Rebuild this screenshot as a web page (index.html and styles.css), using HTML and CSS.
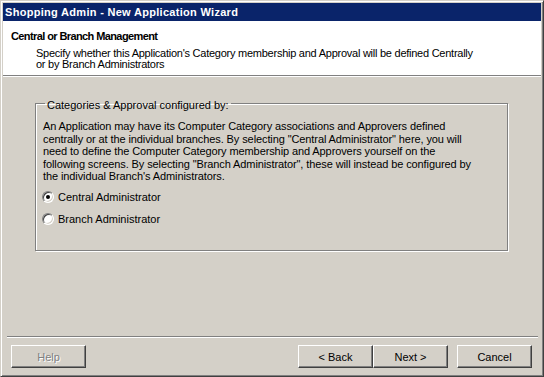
FILE: index.html
```html
<!DOCTYPE html>
<html lang="en">
<head>
    <meta charset="UTF-8">
    <title>Shopping Admin - New Application Wizard</title>
    <link rel="stylesheet" href="styles.css">
</head>
<body>
    <div class="window">
        <div class="titlebar">Shopping Admin - New Application Wizard</div>

        <div class="wizard-header">
            <div class="header-title">Central or Branch Management</div>
            <div class="header-desc">
                Specify whether this Application's Category membership and Approval will be defined Centrally<br>
                or by Branch Administrators
            </div>
        </div>

        <div class="wizard-body">
            <fieldset class="group">
                <legend>Categories &amp; Approval configured by:</legend>
                <p class="group-text">
                    An Application may have its Computer Category associations and Approvers defined<br>
                    centrally or at the individual branches. By selecting "Central Administrator" here, you will<br>
                    need to define the Computer Category membership and Approvers yourself on the<br>
                    following screens. By selecting "Branch Administrator", these will instead be configured by<br>
                    the individual Branch's Administrators.
                </p>
                <label class="radio-row">
                    <input type="radio" name="mode" checked>
                    Central Administrator
                </label>
                <label class="radio-row">
                    <input type="radio" name="mode">
                    Branch Administrator
                </label>
            </fieldset>
        </div>

        <div class="wizard-footer">
            <button class="btn" disabled>Help</button>
            <div class="nav-buttons">
                <button class="btn">&lt; Back</button>
                <button class="btn">Next &gt;</button>
                <button class="btn cancel">Cancel</button>
            </div>
        </div>
    </div>
</body>
</html>
```

FILE: styles.css
```css
body {
    margin: 0;
    background: #d4d0c8;
    font-family: "Liberation Sans", Arial, sans-serif;
    font-size: 11px;
    color: #000;
}
.window {
    width: 544px;
    height: 377px;
    box-sizing: border-box;
    display: flex;
    flex-direction: column;
    padding: 2px;
    border: 1px solid;
    border-color: #d4d0c8 #404040 #404040 #d4d0c8;
    box-shadow: inset 1px 1px 0 #fff, inset -1px -1px 0 #808080;
}
.titlebar {
    height: 18px;
    line-height: 18px;
    padding-left: 2px;
    background: #0a246a;
    color: #fff;
    font-weight: bold;
    letter-spacing: 0.3px;
}
.wizard-header {
    height: 55px;
    box-sizing: border-box;
    padding: 9px 0 0 8px;
    background: #fff;
    border-bottom: 1px solid #808080;
    box-shadow: 0 1px 0 #fff;
}
.header-title {
    font-weight: bold;
    line-height: 13px;
    letter-spacing: -0.6px;
}
.header-desc {
    margin: 5px 0 0 25px;
    line-height: 11px;
    letter-spacing: -0.25px;
}
.wizard-body {
    flex: 1;
    padding: 18px 33px 0 32px;
}
.group {
    margin: 0;
    padding: 0 7px;
    height: 157px;
    box-sizing: border-box;
    border: 1px solid #808080;
    box-shadow: 1px 1px 0 #fff, inset 1px 1px 0 #fff;
}
.group legend {
    margin-left: 2px;
    padding: 5px 2px 0;
    line-height: 13px;
}
.group-text {
    margin: 8px 0 0;
    line-height: 12.5px;
    white-space: nowrap;
    letter-spacing: -0.1px;
}
.radio-row {
    display: flex;
    align-items: center;
    gap: 4px;
    height: 13px;
    margin-top: 8px;
}
.radio-row + .radio-row {
    margin-top: 9px;
}
.radio-row input {
    appearance: none;
    -webkit-appearance: none;
    margin: 0 0 0 -1px;
    width: 12px;
    height: 12px;
    box-sizing: border-box;
    border-radius: 50%;
    border: 1px solid;
    border-color: #808080 #fff #fff #808080;
    background: #fff;
    box-shadow: inset 1px 1px 0 #404040, inset -1px -1px 0 #d4d0c8;
    position: relative;
}
.radio-row input:checked::after {
    content: "";
    position: absolute;
    left: 3px;
    top: 3px;
    width: 4px;
    height: 4px;
    border-radius: 50%;
    background: #000;
}
.wizard-footer {
    display: flex;
    justify-content: space-between;
    margin: 0 3px 0 4px;
    padding: 8px 6px 6px 4px;
    border-top: 1px solid #808080;
    box-shadow: inset 0 1px 0 #fff;
}
.nav-buttons {
    display: flex;
}
.btn {
    width: 75px;
    height: 23px;
    padding: 0;
    font-family: inherit;
    font-size: 11px;
    color: #000;
    background: #d4d0c8;
    border: 1px solid;
    border-color: #fff #404040 #404040 #fff;
    box-shadow: inset -1px -1px 0 #808080;
    border-radius: 0;
}
.btn:disabled {
    color: #808080;
    text-shadow: 1px 1px 0 #fff;
}
.cancel {
    margin-left: 9px;
}
```
